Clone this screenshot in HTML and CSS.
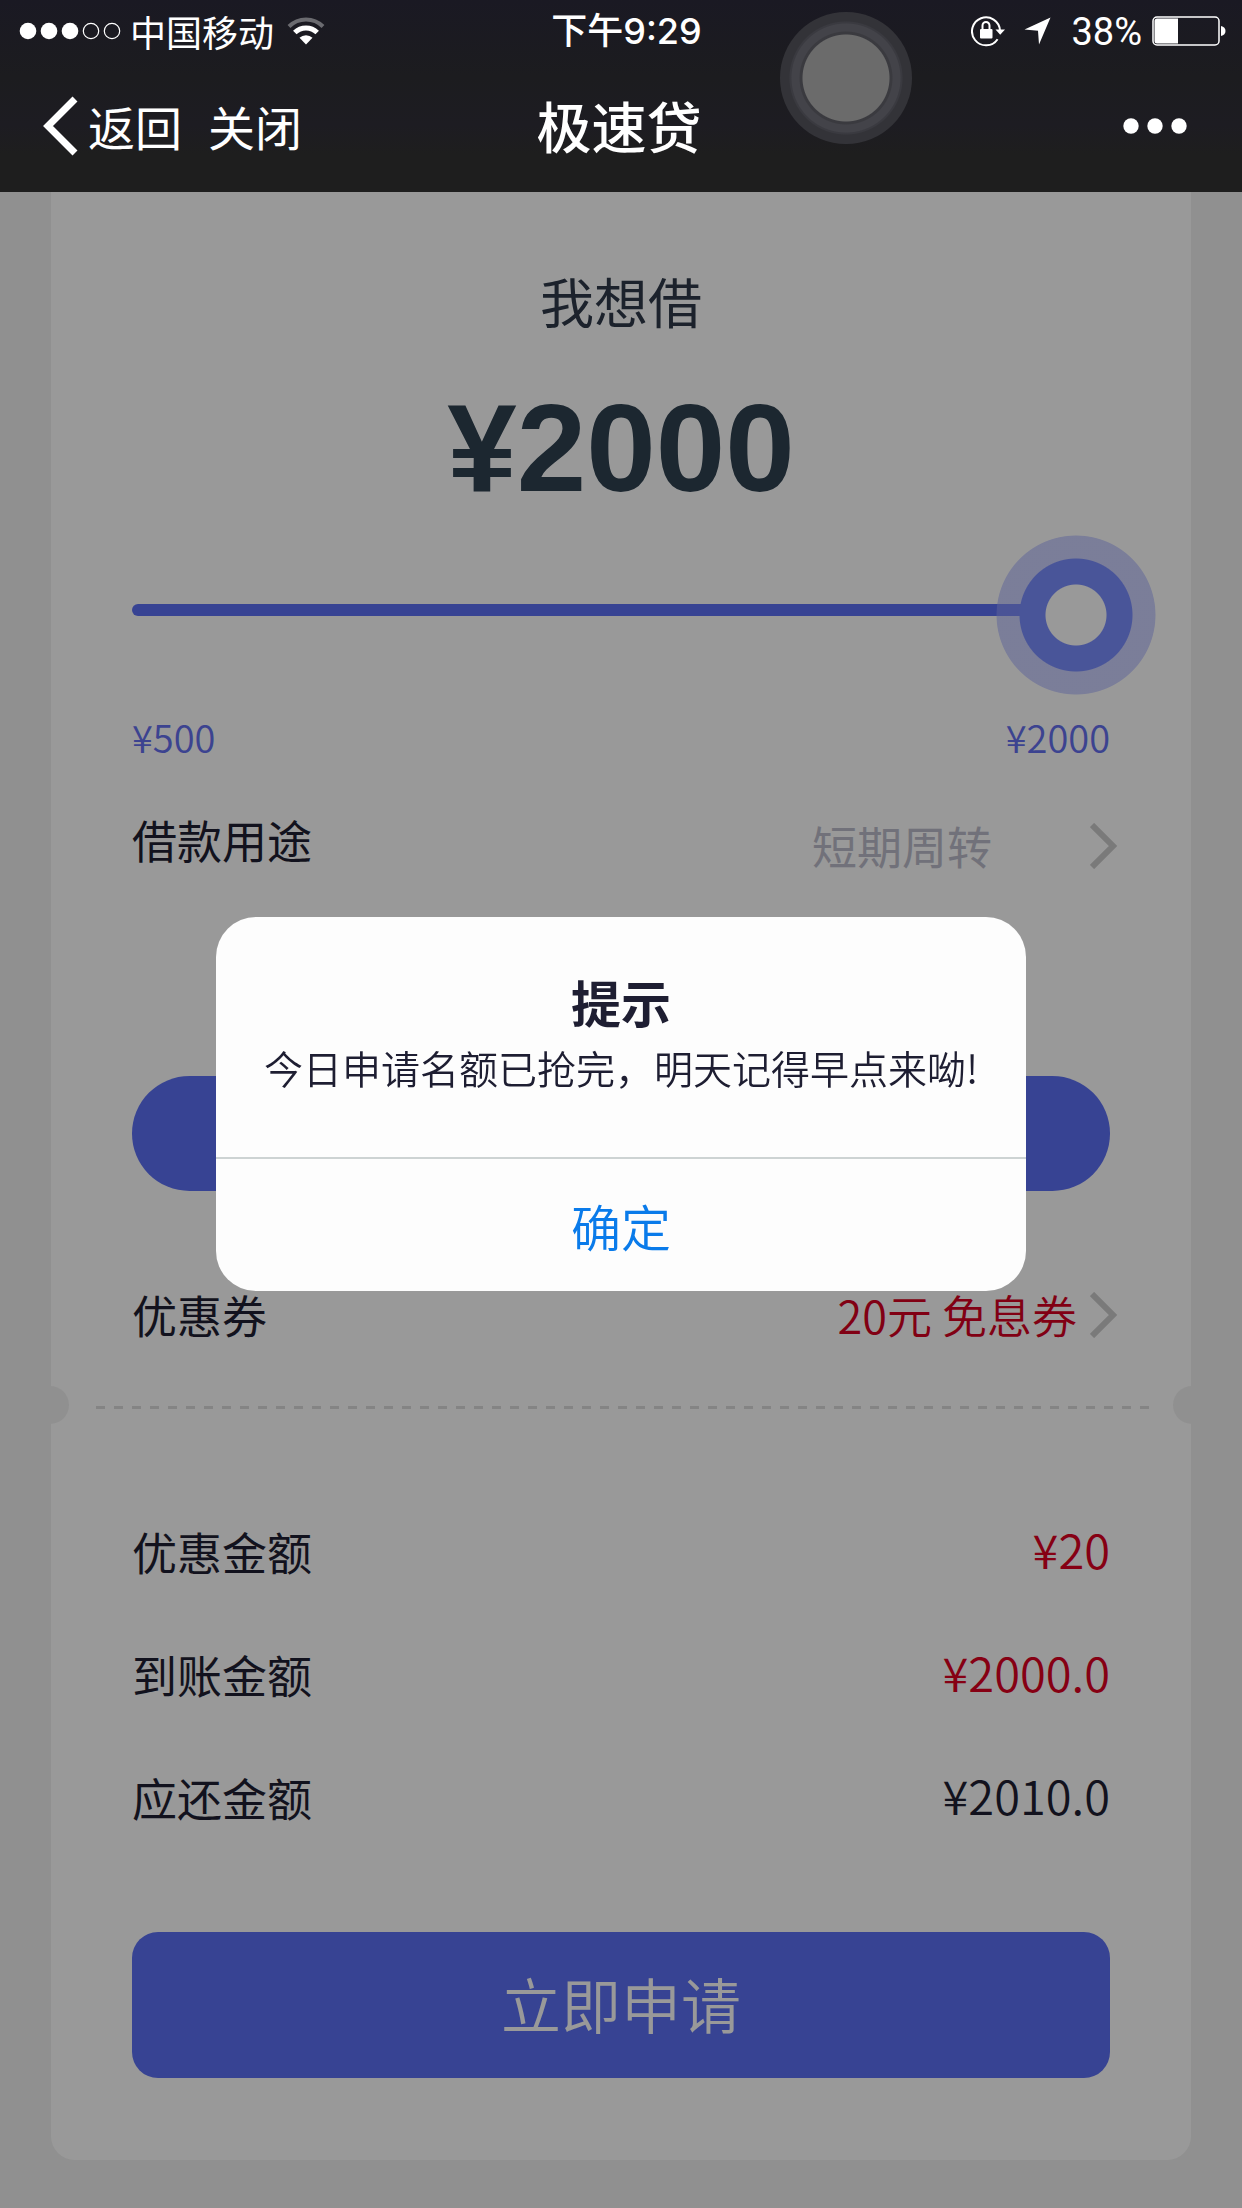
FILE: index.html
```html
<!DOCTYPE html>
<html lang="zh-CN">
<head>
<meta charset="utf-8">
<meta name="viewport" content="width=device-width, initial-scale=1">
<title>极速贷</title>
<link rel="stylesheet" href="styles.css">
</head>
<body>
<header class="header">
  <div class="status">
    <div class="status-left">
      <svg class="signal" width="102" height="18" viewBox="0 0 102 18" aria-hidden="true">
        <g fill="#fff"><circle cx="9" cy="9" r="8.3"/><circle cx="30" cy="9" r="8.3"/><circle cx="51" cy="9" r="8.3"/></g>
        <g fill="none" stroke="#fff" stroke-width="1.2"><circle cx="72" cy="9" r="7.7"/><circle cx="93" cy="9" r="7.7"/></g>
      </svg>
      <span class="carrier">中国移动</span>
      <svg width="38" height="28" viewBox="0 0 38 28" fill="none" aria-hidden="true">
        <path d="M2 9.500a24 24 0 0 1 34 0" stroke="#6b6b70" stroke-width="4"/>
        <path d="M7.800 15.500a16 16 0 0 1 22.400 0" stroke="#fff" stroke-width="5"/>
        <path d="M19 27.500 12.500 20.800a9.300 9.300 0 0 1 13 0z" fill="#fff"/>
      </svg>
    </div>
    <time class="clock">下午9:29</time>
    <div class="status-right">
      <svg class="rotation" width="34" height="32" viewBox="0 0 34 32" fill="none" aria-hidden="true">
        <path d="M26.600 24.200A14 14 0 1 1 29 15.500" stroke="#fff" stroke-width="2"/>
        <path d="M24.500 14.500h9.500l-4.800 5.300z" fill="#fff"/>
        <path d="M11.500 14v-3.500a3.500 3.500 0 0 1 7 0V14" stroke="#fff" stroke-width="2"/>
        <rect x="9" y="14" width="12.500" height="9.500" rx="1" fill="#fff"/>
      </svg>
      <svg class="location" width="27" height="28" viewBox="0 0 27 28" aria-hidden="true"><path d="M26.500.5 15 27.500 14 13.800.5 12.500z" fill="#fff"/></svg>
      <span class="percent">38%</span>
      <svg width="74" height="30" viewBox="0 0 74 30" aria-hidden="true">
        <rect x="1" y="1" width="66" height="28" rx="4" fill="none" stroke="#fff" stroke-width="1.500"/>
        <path d="M5 2.500h21v25H5a2.500 2.500 0 0 1-2.500-2.500V5A2.500 2.500 0 0 1 5 2.500z" fill="#fff"/>
        <path d="M69 10c6 1 6 9 0 10z" fill="#fff"/>
      </svg>
    </div>
  </div>
  <nav class="nav">
    <div class="nav-left">
      <button class="nav-button" type="button">
        <svg width="36" height="60" viewBox="0 0 36 60" fill="none" aria-hidden="true"><path d="M32 3 5 30l27 27" stroke="#fff" stroke-width="7"/></svg>
        返回
      </button>
      <button class="nav-button" type="button">关闭</button>
    </div>
    <h1 class="nav-title">极速贷</h1>
    <button class="more" type="button" aria-label="更多">
      <svg width="64" height="16" viewBox="0 0 64 16" fill="#fff" aria-hidden="true"><circle cx="8" cy="8" r="7.700"/><circle cx="32" cy="8" r="7.700"/><circle cx="56" cy="8" r="7.700"/></svg>
    </button>
  </nav>
  <div class="assist"></div>
</header>

<main class="card">
  <label class="amount-label" for="amount">我想借</label>
  <output class="amount" for="amount">¥2000</output>
  <input class="slider" id="amount" type="range" min="500" max="2000" value="2000">
  <div class="scale"><span>¥500</span><span>¥2000</span></div>

  <div class="row row-purpose">
    <span class="row-label">借款用途</span>
    <button class="picker picker-purpose" type="button">
      短期周转
      <svg width="28" height="46" viewBox="0 0 28 46" fill="none" aria-hidden="true"><path d="m2 2 21 21L2 44" stroke="#cbcbcb" stroke-width="6"/></svg>
    </button>
  </div>

  <button class="pill" type="button" aria-label="确认用途"></button>

  <div class="row row-coupon">
    <span class="row-label">优惠券</span>
    <button class="picker picker-coupon" type="button">
      20元 免息券
      <svg width="28" height="46" viewBox="0 0 28 46" fill="none" aria-hidden="true"><path d="m2 2 21 21L2 44" stroke="#cbcbcb" stroke-width="6"/></svg>
    </button>
  </div>

  <div class="tear"></div>

  <dl class="summary">
    <div class="row"><dt>优惠金额</dt><dd class="red">¥20</dd></div>
    <div class="row"><dt>到账金额</dt><dd class="red">¥2000.0</dd></div>
    <div class="row"><dt>应还金额</dt><dd>¥2010.0</dd></div>
  </dl>

  <button class="apply" type="button">立即申请</button>
</main>

<div class="overlay">
  <div class="dialog" role="alertdialog" aria-modal="true" aria-labelledby="dialog-title" aria-describedby="dialog-text">
    <div class="dialog-body">
      <h2 class="dialog-title" id="dialog-title">提示</h2>
      <p class="dialog-text" id="dialog-text">今日申请名额已抢完，明天记得早点来呦!</p>
    </div>
    <button class="dialog-ok" type="button">确定</button>
  </div>
</div>
</body>
</html>
```

FILE: styles.css
```css
* {
  box-sizing: border-box;
}

body {
  margin: 0;
  padding-bottom: 48px;
  background: #f1f1f1;
  color: #1e1e32;
  font-family: "Noto Sans CJK SC", sans-serif;
  font-size: 45px;
  line-height: 60px;
}

button {
  padding: 0;
  border: 0;
  background: none;
  color: inherit;
  font: inherit;
  cursor: pointer;
}

svg {
  display: block;
  flex: none;
}

/* Header */
.header {
  position: sticky;
  top: 0;
  z-index: 2;
  background: linear-gradient(#1a1923, #1c1c1f 40%, #1d1c22 65%, #1e1e1e 80%);
  color: #fff;
}

.status {
  display: grid;
  grid-template-columns: 1fr auto 1fr;
  align-items: center;
  height: 60px;
  padding: 0 16px 0 19px;
  font-size: 36px;
}

.status-left,
.status-right {
  display: flex;
  align-items: center;
}

.status-left {
  gap: 9px;
}

.carrier {
  margin-right: 4px;
}

.clock {
  padding-left: 8px;
  font-family: Inter, "Noto Sans CJK SC", sans-serif;
  font-weight: 500;
}

.status-right {
  justify-content: flex-end;
}

.location {
  margin: 0 20px 0 19px;
}

.percent {
  margin-right: 10px;
  padding-top: 2px;
  font-family: Roboto, sans-serif;
  font-size: 38px;
}

.nav {
  display: grid;
  grid-template-columns: 1fr auto 1fr;
  align-items: center;
  height: 132px;
  padding: 0 55px 0 43px;
}

.nav-left,
.nav-button {
  display: flex;
  align-items: center;
}

.nav-left {
  gap: 26px;
}

.nav-button {
  gap: 9px;
  font-size: 47px;
}

.nav-title {
  margin: 0;
  padding: 0 0 4px 8px;
  font-size: 55px;
  font-weight: 500;
}

.more {
  justify-self: end;
}

.assist {
  position: absolute;
  top: 12px;
  left: 68%;
  width: 132px;
  height: 132px;
  margin-left: -65px;
  border-radius: 50%;
  background: radial-gradient(circle, #6b6b6b 0 43px, #3a3a3f 44px 46px, #434349 47px 54px, #3a3a40 55px 56px, #333338 57px);
}

/* Loan card */
.card {
  display: flex;
  flex-direction: column;
  margin: 0 51px;
  padding: 79px 81px 82px;
  border-radius: 0 0 24px 24px;
  background: #fff;
}

.amount-label {
  color: #2f3a4a;
  font-size: 54px;
  text-align: center;
}

.amount {
  margin-top: 55px;
  color: #2f4150;
  font-family: "Liberation Sans", Arial, sans-serif;
  font-size: 125px;
  font-weight: 700;
  line-height: 124px;
  text-align: center;
}

.slider {
  height: 160px;
  margin: 25px -46px 0 0;
  background: none;
  -webkit-appearance: none;
  appearance: none;
}

.slider::-webkit-slider-runnable-track {
  height: 12px;
  margin-bottom: 10px;
  border-radius: 6px;
  background: linear-gradient(to right, #5d70f5 calc(100% - 80px), transparent 0);
}

.slider::-webkit-slider-thumb {
  width: 160px;
  height: 160px;
  margin-top: -69px;
  border-radius: 50%;
  background: radial-gradient(circle, #fff 0 30px, #7b8eff 31px 56px, rgba(155, 165, 255, 0.5) 57px 79px, transparent 80px);
  -webkit-appearance: none;
  appearance: none;
}

.scale {
  display: flex;
  justify-content: space-between;
  margin-top: 22px;
  color: #6470f0;
  font-size: 38px;
  font-weight: 350;
  line-height: 40px;
}

.row {
  display: flex;
  align-items: center;
  justify-content: space-between;
}

.row-purpose {
  align-items: flex-start;
  margin-top: 53px;
}

.picker {
  display: flex;
  align-items: center;
  margin-right: -8px;
}

.picker-purpose {
  gap: 98px;
  margin-top: 6px;
  color: #bdbdcb;
}

.picker-coupon {
  gap: 13px;
  color: #d80022;
  font-weight: 350;
}

.pill {
  height: 115px;
  margin-top: 200px;
  border-radius: 58px;
  background: #5d71f5;
}

.row-coupon {
  margin-top: 94px;
}

.tear {
  position: relative;
  height: 3px;
  margin: 61px -41px 0 -36px;
  background: repeating-linear-gradient(to right, #dcdcdc 0 9px, transparent 9px 18px);
}

.tear::before,
.tear::after {
  content: "";
  position: absolute;
  top: -20px;
  width: 38px;
  height: 38px;
  border-radius: 50%;
  background: #f1f1f1;
}

.tear::before {
  left: -65px;
}

.tear::after {
  right: -60px;
}

.summary {
  display: grid;
  gap: 63px;
  margin: 113px 0 0;
}

.summary dd {
  margin: 0;
  padding-bottom: 6px;
  font-size: 47px;
  font-weight: 350;
  line-height: 54px;
}

.summary .red {
  color: #e00022;
}

.apply {
  height: 146px;
  margin-top: 104px;
  padding-bottom: 4px;
  border-radius: 26px;
  background: #5d71f5;
  color: #fff;
  font-size: 60px;
  font-weight: 350;
}

/* Alert */
.overlay {
  position: fixed;
  inset: 0;
  z-index: 1;
  display: flex;
  align-items: center;
  justify-content: center;
  background: rgba(0, 0, 0, 0.4);
}

.dialog {
  width: 810px;
  max-width: 90%;
  overflow: hidden;
  border-radius: 40px;
  background: #fdfdfd;
  text-align: center;
}

.dialog-body {
  padding: 50px 32px 60px;
}

.dialog-title {
  margin: 0 0 2px;
  font-size: 50px;
  line-height: 68px;
}

.dialog-text {
  margin: 0;
  font-size: 39px;
  font-weight: 350;
  white-space: nowrap;
}

.dialog-ok {
  width: 100%;
  height: 134px;
  border-top: 2px solid #cdd3d3;
  color: #0a7bea;
  font-size: 50px;
  font-weight: 350;
}
```
